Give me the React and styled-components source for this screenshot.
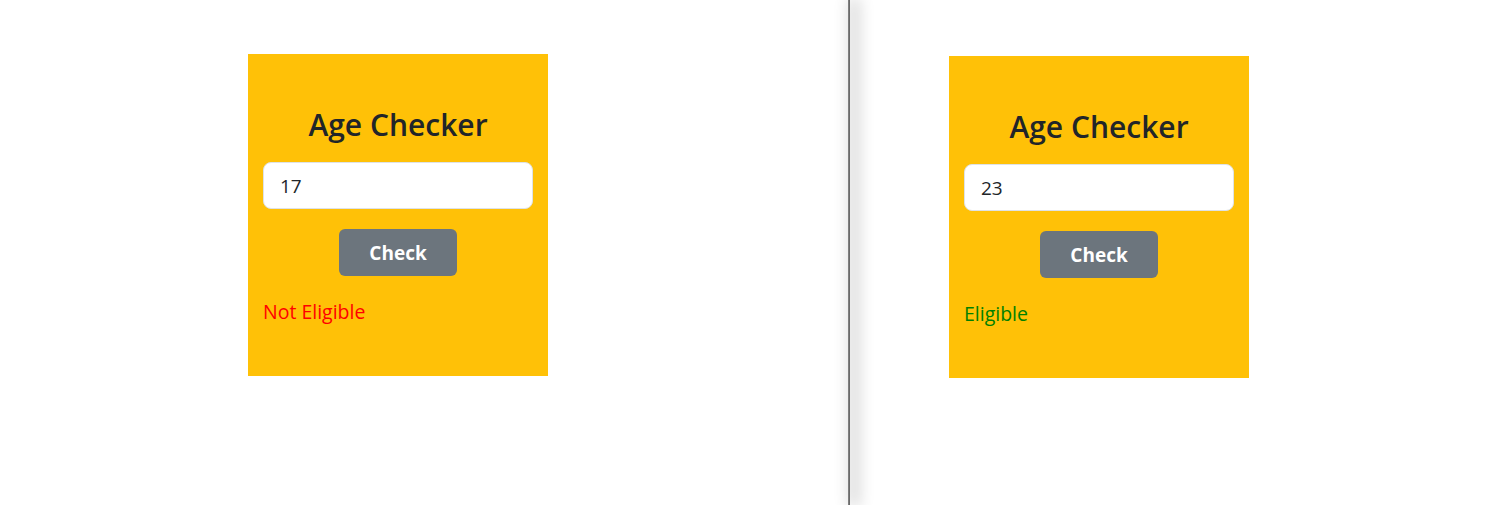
import React from 'react';
import styled, { createGlobalStyle } from 'styled-components';

const GlobalStyle = createGlobalStyle`
  body {
    margin: 0;
    background: #fff;
    font-family: "Open Sans", "Noto Sans", sans-serif;
  }
`;

const Screen = styled.div`
  display: flex;
  width: 1498px;
  height: 505px;
  overflow: hidden;
`;

const Pane = styled.div`
  box-sizing: border-box;
  width: ${props => props.width}px;
  padding-left: ${props => props.left}px;
  padding-top: ${props => props.top}px;
  background: #fff;
`;

// window edge: dark line with a soft shadow falling to the right
const Divider = styled.div`
  width: 2px;
  background: linear-gradient(to right, #8a8a8a, #5f5f5f);
  box-shadow: 5px 0 16px 2px rgba(0, 0, 0, 0.3);
  position: relative;
  z-index: 1;
`;

const Card = styled.div`
  box-sizing: border-box;
  width: 300px;
  height: 322px;
  background: #ffc107;
  padding: 52px 15px 0;
  display: flex;
  flex-direction: column;
`;

const Title = styled.h2`
  margin: 0 0 18px;
  text-align: center;
  font-size: 30px;
  font-weight: 600;
  line-height: 38px;
  color: #212529;
`;

const Input = styled.input`
  box-sizing: border-box;
  width: 100%;
  height: 47px;
  padding: 0 16px;
  border: 1px solid #dee2e6;
  border-radius: 8px;
  background: #fff;
  font-family: inherit;
  font-size: 19px;
  color: #212529;
  outline: none;
`;

const Button = styled.button`
  align-self: center;
  margin-top: 20px;
  width: 118px;
  height: 47px;
  border: none;
  border-radius: 6px;
  background: #6c757d;
  color: #fff;
  font-family: inherit;
  font-size: 19px;
  font-weight: 700;
  cursor: pointer;
`;

const Result = styled.p`
  margin: 21px 0 0;
  font-size: 19.5px;
  line-height: 30px;
  color: ${props => (props.ok ? '#008000' : '#ff0000')};
`;

const AgeChecker = ({ age }) => {
  const ok = Number(age) >= 18;
  return (
    <Card>
      <Title>Age Checker</Title>
      <Input type="number" defaultValue={age} />
      <Button>Check</Button>
      <Result ok={ok}>{ok ? 'Eligible' : 'Not Eligible'}</Result>
    </Card>
  );
};

export default function App() {
  return (
    <>
      <GlobalStyle />
      <Screen>
        <Pane width={848} left={248} top={54}>
          <AgeChecker age="17" />
        </Pane>
        <Divider />
        <Pane width={648} left={99} top={56}>
          <AgeChecker age="23" />
        </Pane>
      </Screen>
    </>
  );
}
